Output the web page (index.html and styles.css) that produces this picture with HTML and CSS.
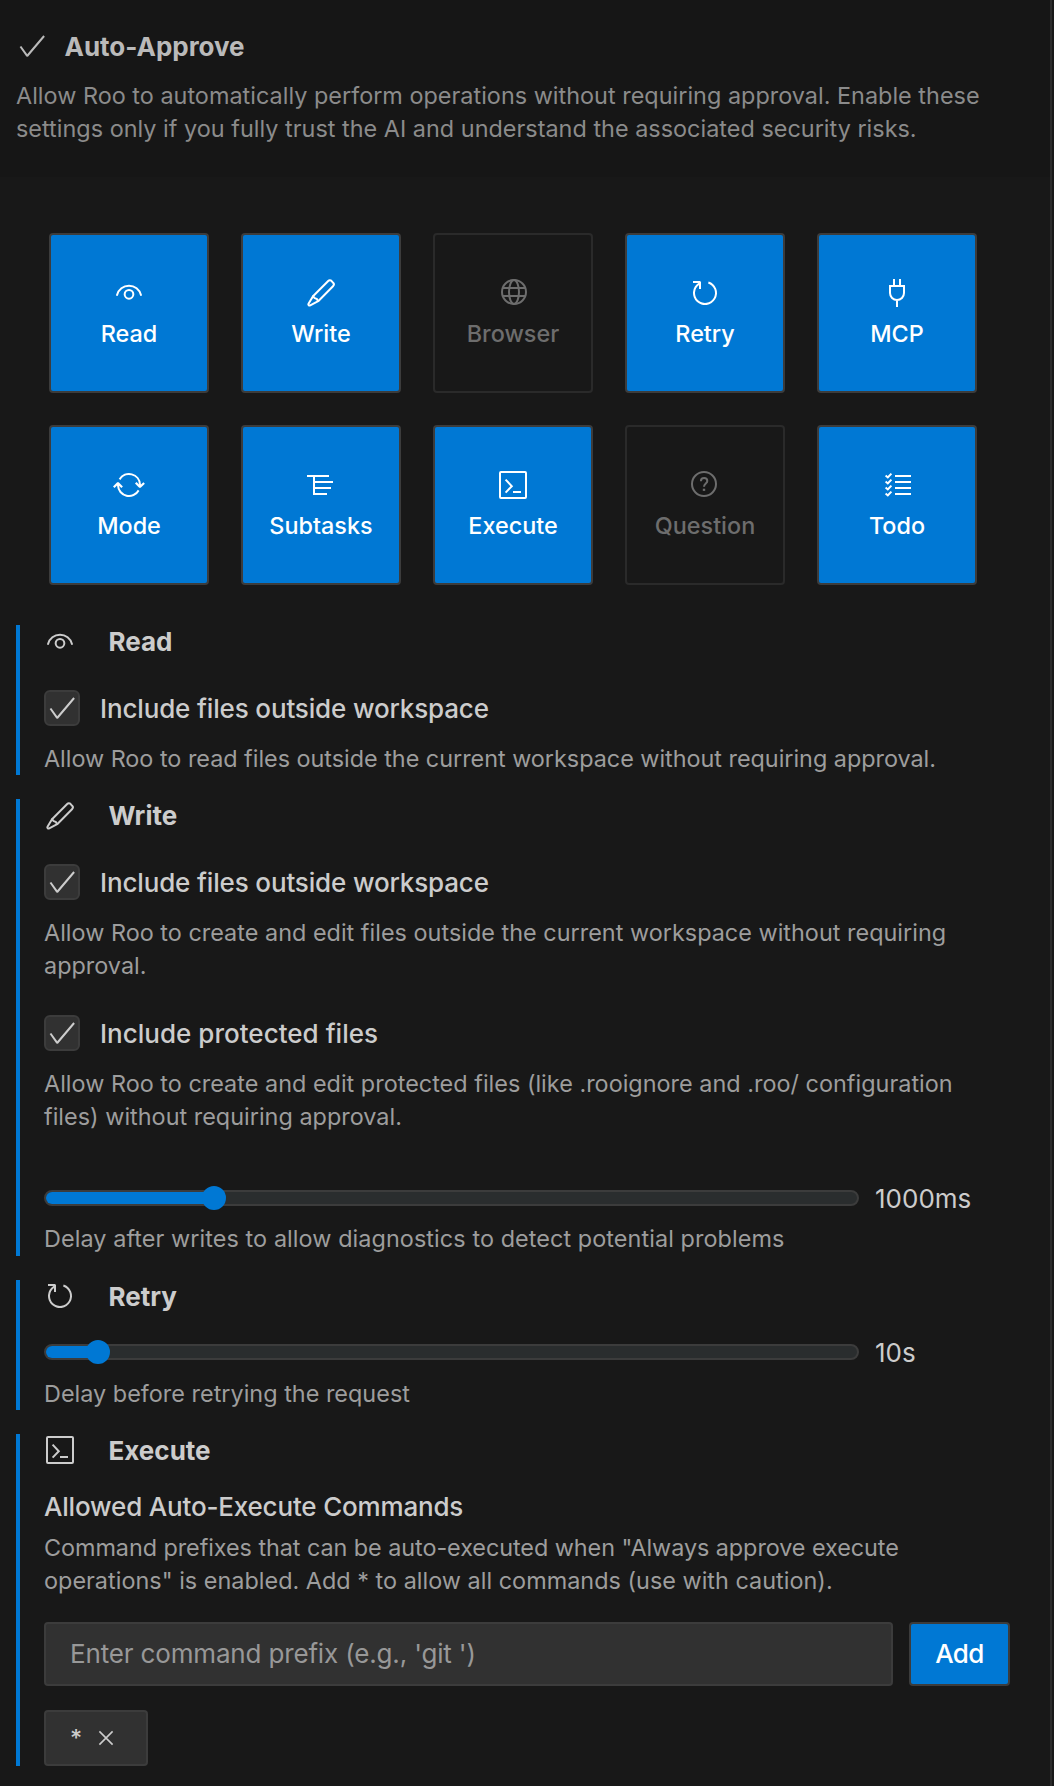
FILE: index.html
```html
<!DOCTYPE html>
<html lang="en">
<head>
<meta charset="utf-8">
<title>Auto-Approve</title>
<link rel="stylesheet" href="styles.css">
</head>
<body>
<svg class="sprite" aria-hidden="true">
  <symbol id="check" viewBox="0 0 16 16"><path fill="currentColor" d="M14.431 3.323l-8.47 10-.79-.036-3.35-4.77.818-.574 2.978 4.24 8.051-9.506.764.646z"/></symbol>
  <symbol id="eye" viewBox="0 0 16 16"><g fill="none" stroke="currentColor" stroke-linecap="round"><circle cx="8" cy="8.67" r="2.17"/><path d="M2.02 9A6.16 6.16 0 0 1 13.98 9"/></g></symbol>
  <symbol id="edit" viewBox="0 0 16 16"><g fill="none" stroke="currentColor" stroke-linejoin="round" stroke-linecap="round"><path d="M11.6 2 4 9.6 1.75 13.4c-.3.6.3 1.1.85.8L6.6 12.1 14 4.6c.6-.6.6-1.2.1-1.7l-.9-1c-.5-.5-1.1-.4-1.6.1z"/><path d="M4.2 9.5c.1 1 .6 1.2 1.2 1.3.6.1.9.5 1 1.2"/></g></symbol>
  <symbol id="globe" viewBox="0 0 16 16"><g fill="none" stroke="currentColor"><circle cx="8.5" cy="7.5" r="6"/><ellipse cx="8.5" cy="7.5" rx="2.5" ry="6"/><path d="M2.9 5.5h11.2M2.9 9.5h11.2"/></g></symbol>
  <symbol id="refresh" viewBox="0 0 16 16"><path fill="currentColor" fill-rule="evenodd" d="M4.681 3H2V2h3.5l.5.5V6H5V4a5 5 0 1 0 4.53-.761l.302-.954A6 6 0 1 1 4.681 3z"/></symbol>
  <symbol id="plug" viewBox="0 0 16 16"><path fill="none" stroke="currentColor" d="M6.5 1v3M9.5 1v3M4.5 4.5h7V8a3.5 3.5 0 0 1-7 0zM8 11.5V15"/></symbol>
  <symbol id="sync" viewBox="0 0 16 16"><path fill="currentColor" fill-rule="evenodd" d="M2.006 8.267L.78 9.5 0 8.73l2.09-2.07.76.01 2.09 2.12-.76.76-1.167-1.18a5 5 0 0 0 9.4 1.983l.813.597a6 6 0 0 1-11.22-2.683zm10.99-.466L11.76 6.55l-.76.76 2.09 2.11.76.01 2.09-2.07-.75-.76-1.194 1.18a6 6 0 0 0-11.11-2.92l.81.594a5 5 0 0 1 9.3 2.346z"/></symbol>
  <symbol id="tree" viewBox="0 0 16 16"><path fill="none" stroke="currentColor" d="M1 3.5h11M4.5 3.5v9M4 6.5h10M4 9.5h9M4 12.5h7"/></symbol>
  <symbol id="terminal" viewBox="0 0 16 16"><g fill="none" stroke="currentColor"><rect x="1.5" y="1.5" width="13" height="13" rx=".5"/><path d="M4.3 5.3 7.4 8.6 4.3 11.8M8 11.5h4"/></g></symbol>
  <symbol id="question" viewBox="0 0 16 16"><g fill="none" stroke="currentColor"><circle cx="7.5" cy="7.5" r="6"/><path d="M5.95 6.1C5.95 5 6.6 4.5 7.55 4.5s1.6.6 1.6 1.5c0 1.3-1.65 1.3-1.65 2.9"/><path d="M6.9 10.4h1.2" stroke-width="1.1"/></g></symbol>
  <symbol id="checklist" viewBox="0 0 16 16"><g fill="none" stroke="currentColor"><path d="M7 3.5h8M7 6.5h8M7 9.5h8M7 12.5h8"/><path d="M2.3 3.3l1.1.9 1.8-1.9M2.3 6.3l1.1.9 1.8-1.9M2.3 9.3l1.1.9 1.8-1.9M2.3 12.3l1.1.9 1.8-1.9"/></g></symbol>
  <symbol id="close" viewBox="0 0 16 16"><path fill="none" stroke="currentColor" stroke-width="1.6" d="M1.4 1.4l13.2 13.2M14.6 1.4 1.4 14.6"/></symbol>
</svg>

<main class="panel">
  <header class="header">
    <h1 class="title"><svg class="icon"><use href="#check"/></svg><span class="title-text">Auto-Approve</span></h1>
    <p class="desc">Allow Roo to automatically perform operations without requiring approval. Enable these<br>settings only if you fully trust the AI and understand the associated security risks.</p>
  </header>

  <div class="toggles">
    <button class="tile"><svg class="icon"><use href="#eye"/></svg>Read</button>
    <button class="tile"><svg class="icon"><use href="#edit"/></svg>Write</button>
    <button class="tile tile-off"><svg class="icon"><use href="#globe"/></svg>Browser</button>
    <button class="tile"><svg class="icon"><use href="#refresh"/></svg>Retry</button>
    <button class="tile"><svg class="icon"><use href="#plug"/></svg>MCP</button>
    <button class="tile"><svg class="icon"><use href="#sync"/></svg>Mode</button>
    <button class="tile"><svg class="icon"><use href="#tree"/></svg>Subtasks</button>
    <button class="tile"><svg class="icon"><use href="#terminal"/></svg>Execute</button>
    <button class="tile tile-off"><svg class="icon"><use href="#question"/></svg>Question</button>
    <button class="tile"><svg class="icon"><use href="#checklist"/></svg>Todo</button>
  </div>

  <div class="sections">
    <section class="section">
      <h2 class="section-title"><svg class="icon"><use href="#eye"/></svg>Read</h2>
      <div class="option">
        <span class="checkbox"><svg class="icon"><use href="#check"/></svg></span>
        <span class="label">Include files outside workspace</span>
      </div>
      <p class="desc desc-option desc-read">Allow Roo to read files outside the current workspace without requiring approval.</p>
    </section>

    <section class="section section-write">
      <h2 class="section-title"><svg class="icon"><use href="#edit"/></svg>Write</h2>
      <div class="option">
        <span class="checkbox"><svg class="icon"><use href="#check"/></svg></span>
        <span class="label">Include files outside workspace</span>
      </div>
      <p class="desc desc-option">Allow Roo to create and edit files outside the current workspace without requiring<br>approval.</p>
      <div class="option option-next">
        <span class="checkbox"><svg class="icon"><use href="#check"/></svg></span>
        <span class="label label-wide">Include protected files</span>
      </div>
      <p class="desc desc-option">Allow Roo to create and edit protected files (like .rooignore and .roo/ configuration<br>files) without requiring approval.</p>
      <div class="slider-row slider-row-write">
        <div class="slider"><div class="range" style="width: 168px"></div><span class="thumb"></span></div>
        <span class="value">1000ms</span>
      </div>
      <p class="desc desc-write">Delay after writes to allow diagnostics to detect potential problems</p>
    </section>

    <section class="section">
      <h2 class="section-title section-title-flush"><svg class="icon"><use href="#refresh"/></svg>Retry</h2>
      <div class="slider-row slider-row-retry">
        <div class="slider"><div class="range" style="width: 52px"></div><span class="thumb"></span></div>
        <span class="value">10s</span>
      </div>
      <p class="desc desc-retry">Delay before retrying the request</p>
    </section>

    <section class="section">
      <h2 class="section-title section-title-flush"><svg class="icon"><use href="#terminal"/></svg>Execute</h2>
      <h3 class="subtitle">Allowed Auto-Execute Commands</h3>
      <p class="desc desc-execute"><span class="tight">Command prefixes that can be auto-executed when "Always approve execute</span><br>operations" is enabled. Add * to allow all commands (use with caution).</p>
      <div class="entry">
        <input class="input" type="text" placeholder="Enter command prefix (e.g., 'git ')">
        <button class="add">Add</button>
      </div>
      <button class="chip">*<svg class="chip-close"><use href="#close"/></svg></button>
    </section>
  </div>
</main>
</body>
</html>
```
FILE: styles.css
```css
* { box-sizing: border-box; }

body {
  margin: 0;
  background: #181818;
  color: #ccc;
  font: 400 26px/36px Inter, "Liberation Sans", sans-serif;
}

h1, h2, h3, p { margin: 0; }

button, input { font: inherit; }

.sprite { display: none; }

.icon {
  display: block;
  flex: none;
  width: 32px;
  height: 32px;
}

.panel {
  width: 1052px;
  height: 1786px;
  border-right: 2px solid #2b2b2b;
}

.header {
  height: 177px;
  padding: 28px 16px 0;
  background: #161616;
}

.title {
  display: flex;
  align-items: center;
  gap: 16.5px;
  height: 36px;
  margin-bottom: 15px;
  color: #bababa;
  font-size: 26px;
  font-weight: 700;
  letter-spacing: -0.02px;
}

.title-text { padding-top: 2px; }

.desc {
  color: #9d9d9d;
  font-size: 23.4px;
  line-height: 33px;
  letter-spacing: 0.02px;
  white-space: nowrap;
}

.header .desc { color: #8b8b8b; }

.toggles {
  display: grid;
  grid-template-columns: repeat(5, 160px);
  gap: 32px;
  padding: 56px 0 40px 49px;
}

.tile {
  display: flex;
  flex-direction: column;
  align-items: center;
  gap: 8px;
  height: 160px;
  padding: 42px 0 0;
  border: 2px solid #3c3c3c;
  border-radius: 4px;
  background: #0078d4;
  color: #fff;
  font-size: 23.4px;
  font-weight: 500;
  line-height: 33px;
}

.tile-off {
  border-color: #2a2a2a;
  background: transparent;
  color: #6d6d6d;
}

.sections {
  display: flex;
  flex-direction: column;
  gap: 24px;
  padding: 0 40px 0 16px;
}

.section {
  padding-left: 24px;
  border-left: 4px solid #0078d4;
}

.section-write { padding-bottom: 1px; }

.section-title {
  display: flex;
  align-items: center;
  gap: 32.5px;
  height: 34px;
  font-size: 26px;
  font-weight: 700;
  line-height: 34px;
}

.section-title-flush { align-items: flex-start; }

.option {
  display: flex;
  align-items: center;
  gap: 20px;
  height: 36px;
  margin-top: 31px;
}

.option-next { margin-top: 33px; }

.checkbox {
  width: 36px;
  height: 36px;
  border: 2px solid #3c3c3c;
  border-radius: 6px;
  background: #313131;
}

.label {
  padding-top: 2px;
  font-weight: 500;
  letter-spacing: -0.15px;
}

.label-wide { letter-spacing: 0.02px; }

.desc-option { margin-top: 16px; }

.desc-read { letter-spacing: -0.02px; }

.slider-row {
  display: flex;
  align-items: center;
  gap: 16px;
  height: 36px;
}

.slider-row-write { margin-top: 47px; }
.slider-row-retry { margin-top: 20px; }

.slider {
  display: flex;
  align-items: center;
  width: 815px;
  height: 16px;
  border: 2px solid #3c3c3c;
  border-radius: 8px;
  background: #2a2d2e;
}

.range {
  height: 12px;
  border-radius: 6px 0 0 6px;
  background: #0078d4;
}

.thumb {
  flex: none;
  width: 24px;
  height: 24px;
  margin-left: -12px;
  border-radius: 50%;
  background: #0078d4;
}

.value { padding-top: 2px; }

.desc-write {
  margin-top: 6px;
  letter-spacing: 0.08px;
}

.desc-retry { margin-top: 7px; }

.subtitle {
  margin-top: 20px;
  font-size: 26px;
  font-weight: 500;
  line-height: 38px;
  letter-spacing: -0.18px;
}

.desc-execute { margin-top: 5px; }

.tight { letter-spacing: -0.06px; }

.entry {
  display: flex;
  gap: 16px;
  margin-top: 25px;
}

.input {
  width: 849px;
  height: 64px;
  padding: 0 24px 1px;
  border: 2px solid #3c3c3c;
  border-radius: 4px;
  background: #313131;
  color: #ccc;
  letter-spacing: -0.16px;
}

.input::placeholder {
  color: #989898;
  opacity: 1;
}

.add {
  width: 101px;
  height: 64px;
  padding: 0;
  border: 2px solid #3c3c3c;
  border-radius: 4px;
  background: #0078d4;
  color: #fff;
  font-weight: 500;
  letter-spacing: -0.6px;
}

.chip {
  display: flex;
  align-items: center;
  gap: 16px;
  width: 104px;
  height: 56px;
  margin-top: 24px;
  padding: 0 0 0 24px;
  border: 2px solid #3c3c3c;
  border-radius: 4px;
  background: #313131;
  color: #ccc;
  font-size: 23.4px;
  font-weight: 500;
}

.chip-close {
  display: block;
  width: 16px;
  height: 16px;
}
```
